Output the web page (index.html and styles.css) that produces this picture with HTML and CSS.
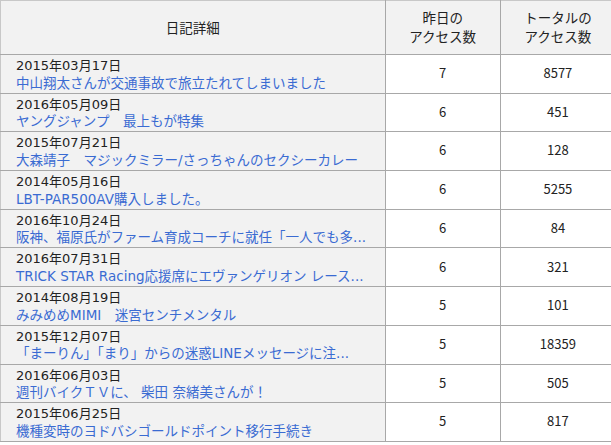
FILE: index.html
```html
<!DOCTYPE html>
<html lang="ja">
<head>
<meta charset="utf-8">
<link rel="stylesheet" href="styles.css">
</head>
<body>
<table class="ranking">
  <thead>
    <tr>
      <th class="col-title">日記詳細</th>
      <th class="col-num">昨日の<br>アクセス数</th>
      <th class="col-num">トータルの<br>アクセス数</th>
    </tr>
  </thead>
  <tbody>
    <tr><td class="entry"><div class="date">2015年03月17日</div><a class="title" href="#">中山翔太さんが交通事故で旅立たれてしまいました</a></td><td class="num">7</td><td class="num">8577</td></tr>
    <tr><td class="entry"><div class="date">2016年05月09日</div><a class="title" href="#">ヤングジャンプ　最上もが特集</a></td><td class="num">6</td><td class="num">451</td></tr>
    <tr><td class="entry"><div class="date">2015年07月21日</div><a class="title" href="#">大森靖子　マジックミラー/さっちゃんのセクシーカレー</a></td><td class="num">6</td><td class="num">128</td></tr>
    <tr><td class="entry"><div class="date">2014年05月16日</div><a class="title" href="#">LBT-PAR500AV購入しました。</a></td><td class="num">6</td><td class="num">5255</td></tr>
    <tr><td class="entry"><div class="date">2016年10月24日</div><a class="title" href="#">阪神、福原氏がファーム育成コーチに就任「一人でも多...</a></td><td class="num">6</td><td class="num">84</td></tr>
    <tr><td class="entry"><div class="date">2016年07月31日</div><a class="title" href="#">TRICK STAR Racing応援席にエヴァンゲリオン レース...</a></td><td class="num">6</td><td class="num">321</td></tr>
    <tr><td class="entry"><div class="date">2014年08月19日</div><a class="title" href="#">みみめめMIMI　迷宮センチメンタル</a></td><td class="num">5</td><td class="num">101</td></tr>
    <tr><td class="entry"><div class="date">2015年12月07日</div><a class="title" href="#">「まーりん」「まり」からの迷惑LINEメッセージに注...</a></td><td class="num">5</td><td class="num">18359</td></tr>
    <tr><td class="entry"><div class="date">2016年06月03日</div><a class="title" href="#">週刊バイクＴＶに、 柴田 奈緒美さんが！</a></td><td class="num">5</td><td class="num">505</td></tr>
    <tr><td class="entry"><div class="date">2015年06月25日</div><a class="title" href="#">機種変時のヨドバシゴールドポイント移行手続き</a></td><td class="num">5</td><td class="num">817</td></tr>
  </tbody>
</table>
</body>
</html>
```
FILE: styles.css
```css
html, body {
  margin: 0;
  padding: 0;
  background: #ffffff;
}
body {
  font-family: "DejaVu Sans", "Noto Sans CJK JP", sans-serif;
  font-size: 13.5px;
  color: #222;
}
.ranking {
  border-collapse: collapse;
  width: 616px;
  table-layout: fixed;
  border-top: 1px solid #c8c8c8;
  border-left: 1px solid #c8c8c8;
}
.ranking th {
  background: #f2f2f2;
  font-weight: normal;
  font-family: "Noto Sans CJK JP", sans-serif;
  line-height: 19px;
  padding: 7px 0 8px 0;
  height: 38px;
  text-align: center;
  vertical-align: middle;
  border-right: 1px solid #a8a8a8;
  border-bottom: 1px solid #a8a8a8;
  color: #222;
}
.ranking .col-title { width: 383px; }
.ranking .col-num { width: 114px; }
.ranking td {
  border-right: 1px solid #a8a8a8;
  border-bottom: 1px solid #a8a8a8;
  line-height: 17.5px;
}
.entry {
  background: #f2f2f2;
  padding: 2px 0 0.7px 15px;
  vertical-align: top;
  white-space: nowrap;
  overflow: hidden;
}
.date {
  color: #222;
  font-size: 13px;
}
.title {
  color: #3a6bd2;
  text-decoration: none;
}
.num {
  background: #ffffff;
  font-family: "Noto Sans CJK JP", sans-serif;
  font-size: 13px;
  text-align: center;
  vertical-align: middle;
  padding: 0 0 2px 0;
}
```
